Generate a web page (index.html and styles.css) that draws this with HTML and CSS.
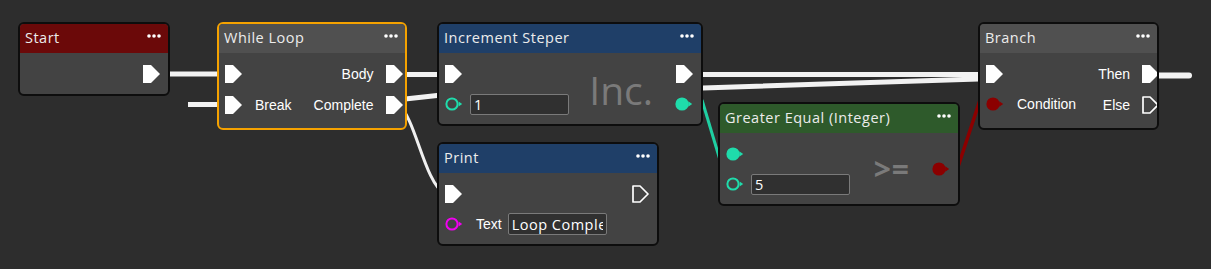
FILE: index.html
```html
<!DOCTYPE html>
<html>
<head>
<meta charset="utf-8">
<link rel="stylesheet" href="styles.css">
</head>
<body>
<svg class="defs" width="0" height="0">
  <defs>
    <symbol id="exec" viewBox="0 0 17 18"><path d="M0 0H8L17 9L8 18H0Z" fill="#fff"/></symbol>
    <symbol id="exec-o" viewBox="0 0 17 18"><path d="M1 1H8L16 9L8 17H1Z" fill="none" stroke="#fff" stroke-width="1.7" stroke-linejoin="round"/></symbol>
    <symbol id="data-o" viewBox="0 0 18 14"><circle cx="7" cy="7" r="5.6" fill="none" stroke="currentColor" stroke-width="2"/><path d="M13.6 4.4L17.2 7L13.6 9.6Z" fill="currentColor"/></symbol>
    <symbol id="data-f" viewBox="0 0 18 14"><circle cx="7" cy="7" r="6.6" fill="currentColor"/><path d="M13.2 4.2L17.2 7L13.2 9.8Z" fill="currentColor"/></symbol>
    <symbol id="dots" viewBox="0 0 14 4"><circle cx="2" cy="2" r="1.8" fill="#fff"/><circle cx="7" cy="2" r="1.8" fill="#fff"/><circle cx="12" cy="2" r="1.8" fill="#fff"/></symbol>
  </defs>
</svg>
<div class="canvas">
  <svg class="wires" width="1211" height="269" viewBox="0 0 1211 269">
    <path class="w-exec" d="M160 74L230 74"/>
    <path class="w-exec" d="M188 104.5L228 104.5"/>
    <path class="w-exec" d="M390 74.5L445 74.5"/>
    <path class="w-exec" d="M396 100L437 95.5L703 88L978 79L985 74"/>
    <path class="w-exec" d="M690 74.5L985 74.5"/>
    <path class="w-exec w-end" d="M1150 75.5L1189 75.5"/>
    <path class="w-thin" d="M398 104C416 118 424 182 445 194"/>
    <path class="w-teal" d="M702 100L720 160"/>
    <path class="w-red" d="M955 176L980 100"/>
  </svg>

  <div class="node n-start">
    <div class="hdr hdr-red"><span class="title">Start</span><svg class="dots"><use href="#dots"/></svg></div>
    <div class="body">
      <div class="col col-in"></div>
      <div class="mid"></div>
      <div class="col col-out">
        <div class="row"><svg class="pin-x"><use href="#exec"/></svg></div>
      </div>
    </div>
  </div>

  <div class="node n-while">
    <div class="hdr"><span class="title">While Loop</span><svg class="dots"><use href="#dots"/></svg></div>
    <div class="body tall">
      <div class="col col-in">
        <div class="row"><svg class="pin-x"><use href="#exec"/></svg></div>
        <div class="row row-low"><svg class="pin-x"><use href="#exec"/></svg><span class="lbl lbl-l">Break</span></div>
      </div>
      <div class="mid"></div>
      <div class="col col-out">
        <div class="row"><span class="lbl lbl-r">Body</span><svg class="pin-x"><use href="#exec"/></svg></div>
        <div class="row row-low"><span class="lbl lbl-r">Complete</span><svg class="pin-x"><use href="#exec"/></svg></div>
      </div>
    </div>
  </div>

  <div class="node n-inc">
    <div class="hdr hdr-blue"><span class="title">Increment Steper</span><svg class="dots"><use href="#dots"/></svg></div>
    <div class="body">
      <div class="col col-in">
        <div class="row"><svg class="pin-x"><use href="#exec"/></svg></div>
        <div class="row"><svg class="pin-d teal"><use href="#data-o"/></svg><input class="field" type="text" value="1" readonly></div>
      </div>
      <div class="mid"><span class="big">Inc.</span></div>
      <div class="col col-out">
        <div class="row"><svg class="pin-x"><use href="#exec"/></svg></div>
        <div class="row"><svg class="pin-d teal"><use href="#data-f"/></svg></div>
      </div>
    </div>
  </div>

  <div class="node n-print">
    <div class="hdr hdr-blue"><span class="title">Print</span><svg class="dots"><use href="#dots"/></svg></div>
    <div class="body">
      <div class="col col-in">
        <div class="row"><svg class="pin-x"><use href="#exec"/></svg></div>
        <div class="row"><svg class="pin-d magenta"><use href="#data-o"/></svg><span class="lbl lbl-l">Text</span><input class="field field-txt" type="text" value="Loop Complete" readonly></div>
      </div>
      <div class="mid"></div>
      <div class="col col-out">
        <div class="row"><svg class="pin-x"><use href="#exec-o"/></svg></div>
      </div>
    </div>
  </div>

  <div class="node n-ge">
    <div class="hdr hdr-green"><span class="title">Greater Equal (Integer)</span><svg class="dots"><use href="#dots"/></svg></div>
    <div class="body">
      <div class="col col-in">
        <div class="row"><svg class="pin-d teal"><use href="#data-f"/></svg></div>
        <div class="row"><svg class="pin-d teal"><use href="#data-o"/></svg><input class="field" type="text" value="5" readonly></div>
      </div>
      <div class="mid"><span class="op">&gt;=</span></div>
      <div class="col col-out col-center">
        <div class="row"><svg class="pin-d red"><use href="#data-f"/></svg></div>
      </div>
    </div>
  </div>

  <div class="node n-branch">
    <div class="hdr"><span class="title">Branch</span><svg class="dots"><use href="#dots"/></svg></div>
    <div class="body tall">
      <div class="col col-in">
        <div class="row"><svg class="pin-x"><use href="#exec"/></svg></div>
        <div class="row"><svg class="pin-d red"><use href="#data-f"/></svg><span class="lbl lbl-l">Condition</span></div>
      </div>
      <div class="mid"></div>
      <div class="col col-out">
        <div class="row"><span class="lbl lbl-r">Then</span><svg class="pin-x"><use href="#exec"/></svg></div>
        <div class="row row-low"><span class="lbl lbl-r">Else</span><svg class="pin-x"><use href="#exec-o"/></svg></div>
      </div>
    </div>
  </div>
</div>
</body>
</html>
```

FILE: styles.css
```css
* { box-sizing: border-box; }
html, body { margin: 0; padding: 0; }
body {
  background: #2d2d2d;
  width: 1211px;
  height: 269px;
  overflow: hidden;
  font-family: "Open Sans", "Noto Sans", sans-serif;
}
.defs { position: absolute; width: 0; height: 0; }
.canvas { position: relative; width: 1211px; height: 269px; }
.wires { position: absolute; left: 0; top: 0; }
.w-exec { fill: none; stroke: #f2f2f2; stroke-width: 5; }
.w-end { stroke-width: 6; stroke-linecap: round; }
.w-thin { fill: none; stroke: #efefef; stroke-width: 3; }
.w-teal { fill: none; stroke: #1fcfa2; stroke-width: 3; }
.w-red { fill: none; stroke: #8b0000; stroke-width: 3.5; }

.node {
  position: absolute;
  display: flex;
  flex-direction: column;
  background: #434343;
  border: 2px solid #0d0d0d;
  border-radius: 6px;
  overflow: hidden;
}
.n-start { left: 18px; top: 22px; width: 152px; }
.n-while { left: 217px; top: 22px; width: 190px; border-color: #f5a200; }
.n-inc { left: 437px; top: 22px; width: 266px; }
.n-print { left: 437px; top: 142px; width: 222px; }
.n-ge { left: 718px; top: 102px; width: 242px; }
.n-branch { left: 978px; top: 22px; width: 181px; }

.hdr {
  height: 29px;
  display: flex;
  align-items: center;
  justify-content: space-between;
  padding: 0 7px 0 5px;
  background: #505050;
  color: #ececec;
  font-size: 14.5px;
  letter-spacing: 0.5px;
}
.hdr-red { background: #6b0909; }
.hdr-blue { background: #1f3f68; }
.hdr-green { background: #2e5a2b; }
.title { line-height: 1; }
.dots { width: 14px; height: 4px; margin-top: -5px; }

.body {
  display: flex;
  padding: 6px 8px 5px 6px;
}
.body.tall { padding-bottom: 9px; }
.col { display: flex; flex-direction: column; }
.col-center { justify-content: center; }
.row { height: 30px; display: flex; align-items: center; }
.row-low { padding-top: 2px; }
.col-out .row { justify-content: flex-end; }
.mid {
  flex: 1;
  display: flex;
  align-items: center;
  justify-content: flex-end;
  padding-right: 22px;
}
.pin-x { width: 17px; height: 18px; display: block; }
.pin-d { width: 18px; height: 14px; display: block; }
.teal { color: #1fdcab; }
.magenta { color: #f000f0; }
.red { color: #8b0000; }

.lbl {
  font-family: "Liberation Sans", Arial, sans-serif;
  font-size: 14px;
  color: #ffffff;
  white-space: nowrap;
}
.lbl-l { margin-left: 13px; }
.lbl-r { margin-right: 12px; }

.field {
  display: block;
  width: 99px;
  height: 21px;
  margin: 0 0 0 7px;
  padding: 0 3px;
  border: 1px solid #7a7a7a;
  border-radius: 2px;
  background: #303030;
  color: #ffffff;
  font-family: "Open Sans", "Noto Sans", sans-serif;
  font-size: 14.5px;
  letter-spacing: 0.5px;
  line-height: 19px;
  outline: none;
}
.field-txt { margin-left: 6px; height: 22px; }

.big {
  font-size: 39px;
  color: #7a7a7a;
  line-height: 1;
}
.op {
  font-size: 30px;
  font-weight: 700;
  color: #7a7a7a;
  line-height: 1;
  letter-spacing: 1px;
}
```
